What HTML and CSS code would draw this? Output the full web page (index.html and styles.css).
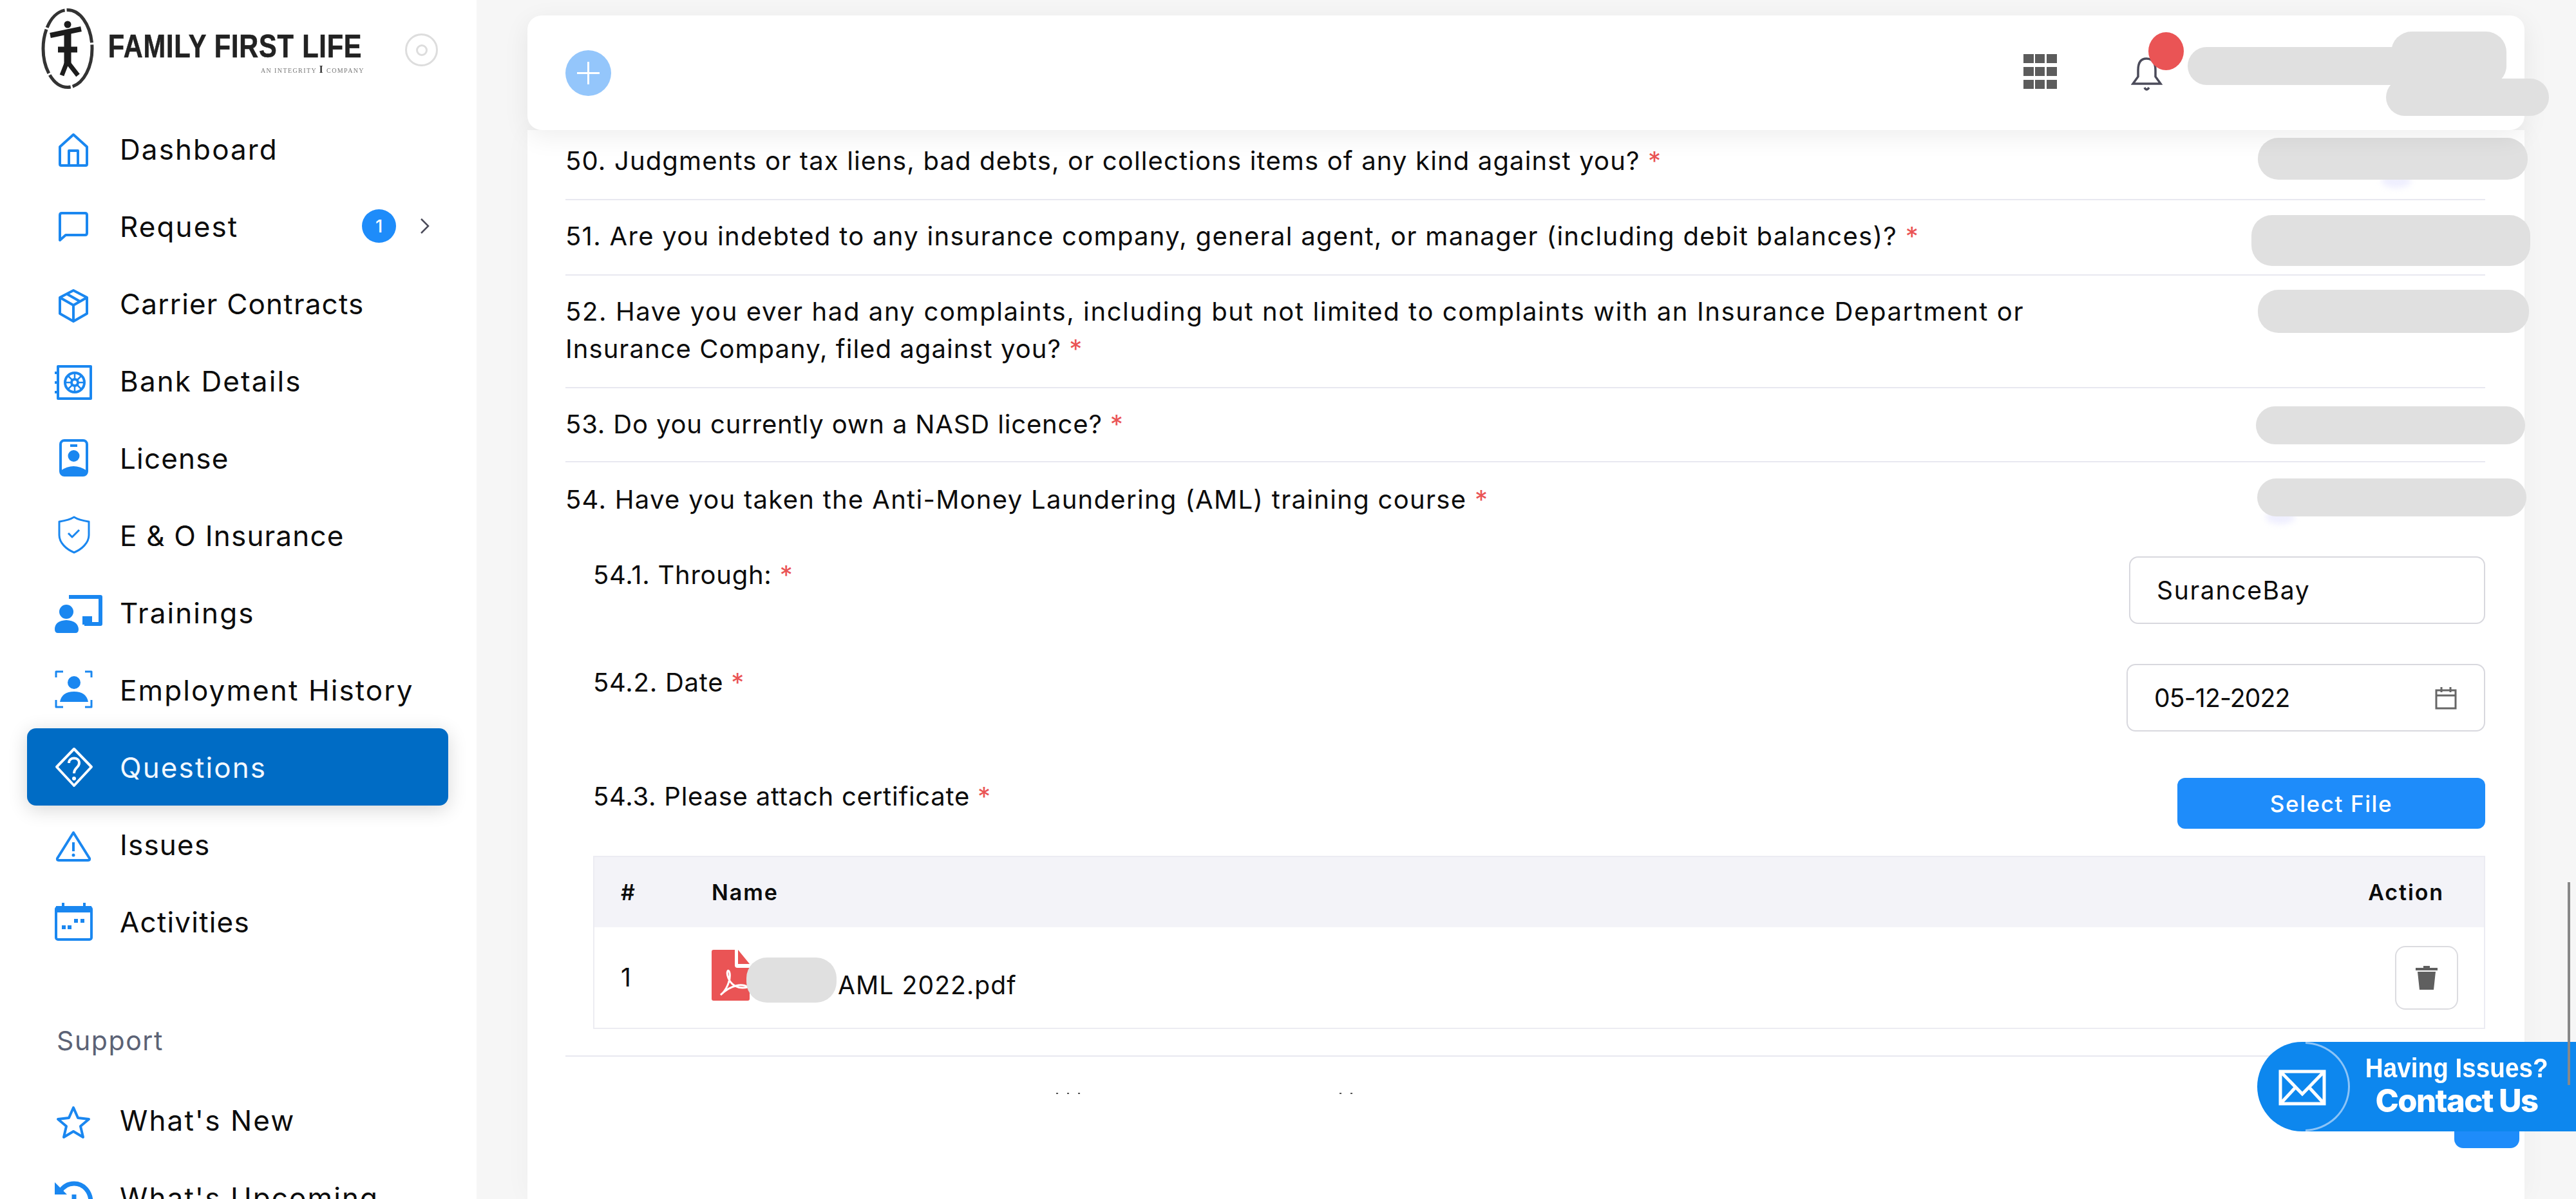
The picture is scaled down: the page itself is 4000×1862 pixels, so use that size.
FILE: index.html
```html
<!DOCTYPE html>
<html lang="en">
<head>
<meta charset="utf-8">
<title>Questions</title>
<link rel="stylesheet" href="styles.css">
</head>
<body>
<div class="app">
  <aside class="sidebar">
    <div class="brand">
      <svg class="brand-mark" viewBox="0 0 82 125">
        <ellipse cx="41" cy="62.500" rx="38" ry="60" fill="none" stroke="#333" stroke-width="5" stroke-dasharray="70 3 40 3"/>
        <circle cx="41" cy="25" r="5.500" fill="#1c1c1c"/>
        <path d="M14 42 L62 32" fill="none" stroke="#1c1c1c" stroke-width="8"/>
        <path d="M41 34 V90" fill="none" stroke="#1c1c1c" stroke-width="11"/>
        <path d="M26 64 H56" fill="none" stroke="#1c1c1c" stroke-width="9"/>
        <path d="M39 86 L32 104 M43 86 L57 104" fill="none" stroke="#1c1c1c" stroke-width="7"/>
      </svg>
      <div class="brand-text">
        <span class="brand-name">FAMILY FIRST LIFE</span>
        <span class="brand-sub">AN INTEGRITY <b>I</b> COMPANY</span>
      </div>
      <span class="brand-toggle"><i></i></span>
    </div>
    <nav class="nav">
      <a class="nav-item"><svg class="ico" viewBox="0 0 74 60"><path class="s" d="M29 8 L8 27 V54 Q8 56 10 56 H48 Q50 56 50 54 V27 Z M22 56 V33 H36 V56"/></svg><span>Dashboard</span></a>
      <a class="nav-item nav-request"><svg class="ico" viewBox="0 0 74 60"><path class="s" d="M11 10 H47 Q50 10 50 13 V41 Q50 44 47 44 H17 L8 52 V13 Q8 10 11 10 Z"/></svg><span>Request</span><b class="badge">1</b><svg class="chev" viewBox="0 0 15 24"><path d="M2 1 L13 12 L2 23" fill="none" stroke="#4b4b5a" stroke-width="2.500"/></svg></a>
      <a class="nav-item tight"><svg class="ico" viewBox="0 0 74 60"><path class="s" d="M29 10 L50 21 V46 L29 58 L8 46 V21 Z M8 21 L29 33 L50 21 M29 33 V58 M18 15 L39 27"/></svg><span>Carrier Contracts</span></a>
      <a class="nav-item"><svg class="ico" viewBox="0 0 74 60"><path class="s" d="M5 8 H56 V58 H5 Z M0 18 H5 M0 33 H5 M0 48 H5"/><circle class="s" cx="31" cy="33" r="15"/><circle class="s" cx="31" cy="33" r="5"/><path class="s s2" d="M31 18 V28 M31 38 V48 M16 33 H26 M36 33 H46 M20 22 L27 29 M35 37 L42 44 M42 22 L35 29 M27 37 L20 44"/></svg><span>Bank Details</span></a>
      <a class="nav-item tight"><svg class="ico" viewBox="0 0 74 60"><rect class="s" x="9" y="3" width="41" height="54" rx="6"/><path class="s" d="M24 11 H35"/><circle class="f" cx="29.500" cy="27" r="9"/><path class="f" d="M9 50 Q29 36 50 50 V52 Q50 58 44 58 H15 Q9 58 9 52 Z"/></svg><span>License</span></a>
      <a class="nav-item tight"><svg class="ico" viewBox="0 0 74 60"><path class="s s3" d="M30 2 C22 7 14 8 7 9 V30 C7 42 18 52 30 57 C42 52 53 42 53 30 V9 C46 8 38 7 30 2 Z M21 27 L27 33 L38 22"/></svg><span>E &amp; O Insurance</span></a>
      <a class="nav-item"><svg class="ico" viewBox="0 0 74 60"><path class="s s5" d="M22 6 H71 V48 H46"/><rect class="f" x="43" y="36" width="15" height="13"/><circle class="f" cx="18" cy="29" r="11"/><path class="f" d="M0 56 Q0 43 18 42 Q36 43 37 56 Q37 62 32 62 H5 Q0 62 0 56 Z"/></svg><span>Trainings</span></a>
      <a class="nav-item"><svg class="ico" viewBox="0 0 74 60"><path class="s s3" d="M2 11 V2 H13 M47 2 H57 V11 M2 46 V57 H13 M47 57 H57 V46"/><circle class="f" cx="30" cy="19" r="10"/><path class="f" d="M8 49 Q11 33 30 33 Q49 33 52 49 Z"/></svg><span>Employment History</span></a>
      <a class="nav-item is-active"><svg class="ico" viewBox="0 0 74 60"><path class="w" d="M30 2 L57 30 L30 59 L3 30 Z M22 24 C22 14 38 14 38 24 C38 31 30 31 30 40"/><circle cx="30" cy="48" r="3" fill="#fff"/></svg><span>Questions</span></a>
      <a class="nav-item tight"><svg class="ico" viewBox="0 0 74 60"><path class="s" d="M29 12 L54 52 Q55 55 52 55 H6 Q3 55 4 52 Z M29 27 V41"/><circle class="f" cx="29" cy="47" r="2.500"/></svg><span>Issues</span></a>
      <a class="nav-item tight"><svg class="ico" viewBox="0 0 74 60"><rect class="s" x="2" y="8" width="55" height="50" rx="3"/><rect class="f" x="2" y="6" width="55" height="10"/><path class="s" d="M13 1 V7 M46 1 V7"/><rect class="f" x="11" y="36" width="6" height="6"/><rect class="f" x="20" y="36" width="6" height="6"/><rect class="f" x="30" y="26" width="6" height="6"/><rect class="f" x="40" y="26" width="6" height="6"/></svg><span>Activities</span></a>
      <div class="nav-heading">Support</div>
      <a class="nav-item"><svg class="ico" viewBox="0 0 74 60"><path class="s" d="M29 11 L36 27 L53 29 L40 40 L44 57 L29 48 L14 57 L18 40 L5 29 L22 27 Z"/></svg><span>What's New</span></a>
      <a class="nav-item"><svg class="ico" viewBox="0 0 74 60"><path class="s s6" d="M8 22 C14 12 22 9 30 9 C45 9 56 22 56 38 M30 26 V46"/><path class="f" d="M0 7 L19 26 H0 Z"/></svg><span>What's Upcoming</span></a>
    </nav>
  </aside>

  <main class="main">
    <header class="topbar">
      <span class="add-btn"><svg viewBox="0 0 35 35"><path d="M17.500 0 V35 M0 17.500 H35" stroke="#fff" stroke-width="3"/></svg></span>
      <svg class="apps" viewBox="0 0 52 54"><g fill="#5c5c5c"><rect width="16" height="14"/><rect x="18" width="15" height="14"/><rect x="36" width="16" height="14"/><rect y="20" width="16" height="14"/><rect x="18" y="20" width="15" height="14"/><rect x="36" y="20" width="16" height="14"/><rect y="40" width="16" height="14"/><rect x="18" y="40" width="15" height="14"/><rect x="36" y="40" width="16" height="14"/></g></svg>
      <span class="bell">
        <svg viewBox="0 0 49 54"><path d="M24 2 C14 2 11 10 11 20 V30 L3 41 H46 L38 30 V20 C38 10 34 2 24 2 Z M21 47 Q24 53 28 47" fill="none" stroke="#4b4b5a" stroke-width="3.500"/></svg>
        <i class="bell-dot"></i>
      </span>
      <span class="mask mask-a"></span>
      <span class="mask mask-b"></span>
      <span class="mask mask-c"></span>
    </header>

    <section class="card">
      <div class="q q-first"><p>50. Judgments or tax liens, bad debts, or collections items of any kind against you? <em>*</em></p><span class="mask m50"></span><i class="tint tint-50"></i></div>
      <div class="q"><p>51. Are you indebted to any insurance company, general agent, or manager (including debit balances)? <em>*</em></p><span class="mask m51"></span></div>
      <div class="q q-52"><p>52. Have you ever had any complaints, including but not limited to complaints with an Insurance Department or<br><span class="q-52b">Insurance Company, filed against you? <em>*</em></span></p><span class="mask m52"></span></div>
      <div class="q q-53"><p>53. Do you currently own a NASD licence? <em>*</em></p><span class="mask m53"></span></div>
      <div class="q q-last">
        <p>54. Have you taken the Anti-Money Laundering (AML) training course <em>*</em></p><span class="mask m54"></span><i class="tint tint-54"></i>
        <div class="subs">
          <div class="sub sub-1"><p>54.1. Through: <em>*</em></p><div class="field field-text">SuranceBay</div></div>
          <div class="sub sub-2"><p>54.2. Date <em>*</em></p><div class="field field-date">05-12-2022<svg viewBox="0 0 34 36"><path d="M2 6 H32 V34 H2 Z M2 14 H32 M10 1 V9 M24 1 V9" fill="none" stroke="#666" stroke-width="3"/></svg></div></div>
          <div class="sub sub-3"><p>54.3. Please attach certificate <em>*</em></p><button class="select-btn">Select File</button></div>
          <table class="files">
            <thead><tr><th class="c-num">#</th><th>Name</th><th class="c-act">Action</th></tr></thead>
            <tbody><tr>
              <td class="c-num">1</td>
              <td><div class="file"><svg class="pdf" viewBox="0 0 59 79"><path fill="#ea5455" d="M3 0 H36 V24 Q36 28 40 28 H59 V76 Q59 79 56 79 H3 Q0 79 0 76 V3 Q0 0 3 0 Z M41 0 L59 22 H41 Z"/><path fill="none" stroke="#fff" stroke-width="3" d="M14 70 C22 64 30 48 28 36 C26 28 22 34 26 44 C30 54 40 62 56 58 C48 52 30 54 14 70 Z"/></svg><span class="mask m-file"></span><span class="file-name">AML 2022.pdf</span></div></td>
              <td class="c-act"><span class="del-btn"><svg viewBox="0 0 34 37"><path fill="#5f5f5f" d="M12 0 H22 V3 H34 V7 H0 V3 H12 Z M3 9 H31 L28 37 H6 Z"/></svg></span></td>
            </tr></tbody>
          </table>
        </div>
      </div>
      <div class="form-foot">
        <span class="specks"><i></i><i></i><i></i></span>
        <span class="specks specks-b"><i></i><i></i></span>
        <span class="next-btn"></span>
      </div>
    </section>
  </main>
</div>

<aside class="contact">
  <span class="contact-disc"><svg viewBox="0 0 74 56"><path d="M3 3 H71 V53 H3 Z M3 3 L37 38 L71 3 M3 53 L27 27 M71 53 L47 27" fill="none" stroke="#fff" stroke-width="5"/></svg></span>
  <span class="contact-text"><span class="contact-a">Having Issues?</span><span class="contact-b">Contact Us</span></span>
</aside>
<span class="thumb"></span>
</body>
</html>
```
FILE: styles.css
```css
* { box-sizing: border-box; }
html, body { margin: 0; height: 1862px; overflow: hidden; }
body { background: #f6f6f6; font-family: Inter, "Liberation Sans", sans-serif; color: #0c0c0c; position: relative; }
p { margin: 0; }
em { color: #ea5455; font-style: normal; }
.app { display: flex; height: 1862px; }

/* sidebar */
.sidebar { width: 740px; flex: none; background: #fff; height: 1862px; overflow: hidden; }
.brand { height: 171px; display: flex; align-items: flex-start; padding: 13px 0 0 64px; position: relative; }
.brand-mark { width: 82px; height: 125px; flex: none; filter: blur(.7px); }
.brand-text { display: flex; flex-direction: column; align-items: flex-end; width: 395px; margin-left: 21px; padding-top: 30px; filter: blur(.7px); color: #222; }
.brand-name { font-family: "Liberation Sans", sans-serif; font-weight: 700; font-size: 50px; line-height: 58px; letter-spacing: 1px; white-space: nowrap; transform: scaleX(.83); transform-origin: right center; -webkit-text-stroke: .6px #222; }
.brand-sub { font-family: "Liberation Serif", serif; font-size: 10px; line-height: 14px; letter-spacing: 1.4px; color: #777; white-space: nowrap; margin-right: -4px; }
.brand-sub b { font-size: 16px; color: #333; }
.brand-toggle { width: 51px; height: 51px; border: 3px solid #ddd; border-radius: 50%; margin: 39px 0 0 67px; display: flex; align-items: center; justify-content: center; flex: none; }
.brand-toggle i { width: 18px; height: 18px; border: 3px solid #ddd; border-radius: 50%; }

.nav { padding: 0 44px 0 42px; }
.nav-item { display: flex; align-items: center; height: 120px; padding: 0 29px 0 43px; font-size: 44px; letter-spacing: 2.1px; color: #0c0c0c; border-radius: 14px; white-space: nowrap; }
.nav-item.tight { letter-spacing: 1.2px; }
.nav-item > span:first-of-type { margin-left: 27px; padding-top: 1px; }
.ico { width: 74px; height: 60px; flex: none; overflow: visible; }
.s { fill: none; stroke: #1a87f0; stroke-width: 4; stroke-linejoin: round; }
.s2 { stroke-width: 2.5; }
.s3 { stroke-width: 3; }
.s5 { stroke-width: 6; }
.s6 { stroke-width: 7; }
.f { fill: #1a87f0; }
.w { fill: none; stroke: #fff; stroke-width: 4; stroke-linejoin: round; }
.is-active { background: #006cc5; color: #f2f8ff; box-shadow: 0 6px 30px rgba(0, 0, 0, .16); }
.badge { margin-left: auto; width: 53px; height: 52px; border-radius: 50%; background: #1e8cfa; color: #fff; font-weight: 500; font-size: 27px; letter-spacing: 0; display: flex; align-items: center; justify-content: center; }
.chev { width: 15px; height: 24px; margin-left: 37px; flex: none; }
.nav-heading { height: 188px; padding: 95px 0 0 46px; font-size: 41px; line-height: 60px; letter-spacing: 1.6px; color: #5b6275; }

/* main */
.main { flex: 1; min-width: 0; padding: 24px 80px 0 79px; display: flex; flex-direction: column; height: 1862px; }
.topbar { height: 178px; flex: none; background: #fff; border-radius: 22px; display: flex; align-items: center; padding-left: 59px; position: relative; z-index: 2; box-shadow: 0 10px 40px rgba(0, 0, 0, .07); }
.add-btn { width: 71px; height: 71px; border-radius: 50%; background: #94c6fb; display: flex; align-items: center; justify-content: center; }
.add-btn svg { width: 35px; height: 35px; }
.apps { width: 52px; height: 54px; margin-left: auto; margin-top: -4px; }
.bell { width: 49px; height: 54px; margin: 6px 562px 0 115px; position: relative; }
.bell svg { width: 49px; height: 54px; display: block; }
.bell-dot { position: absolute; left: 27px; top: -39px; width: 55px; height: 59px; border-radius: 50%; background: #ea5455; }
.mask { background: #e0e0e0; border-radius: 32px; position: absolute; display: block; z-index: 1; }
.mask-a { left: 2578px; top: 49px; width: 495px; height: 59px; }
.mask-b { left: 2894px; top: 25px; width: 179px; height: 83px; }
.mask-c { left: 2886px; top: 98px; width: 253px; height: 58px; }

.card { flex: 1; background: #fff; padding: 0 61px 0 59px; box-shadow: 0 0 40px rgba(0, 0, 0, .035); }
.q { position: relative; padding: 27px 0 30px; border-bottom: 2px solid #e8e8f0; font-size: 40px; line-height: 58px; letter-spacing: 1.3px; }
.q-first { padding-top: 19px; letter-spacing: 1.15px; }
.q-52 { letter-spacing: 1.6px; }
.q-52b { letter-spacing: 1.05px; }
.q-53 { padding: 27px 0 28px; letter-spacing: .85px; }
.q-last { padding: 29px 0 41px; }
.m50 { left: 2628px; top: 12px; width: 419px; height: 65px; }
.m51 { left: 2618px; top: 23px; width: 433px; height: 79px; }
.m52 { left: 2628px; top: 22px; width: 421px; height: 67px; }
.m53 { left: 2625px; top: 28px; width: 418px; height: 59px; }
.m54 { left: 2627px; top: 25px; width: 418px; height: 59px; }
.tint { position: absolute; width: 46px; height: 22px; border-radius: 50%; background: #efefff; filter: blur(5px); }
.tint-50 { left: 2820px; top: 68px; }
.tint-54 { left: 2640px; top: 74px; }

.subs { padding: 59px 0 0 43px; letter-spacing: .75px; }
.sub { display: flex; justify-content: space-between; align-items: flex-start; }
.sub-2 { margin-top: 62px; }
.sub-3 { margin-top: 72px; }
.field { height: 105px; border: 2.5px solid #d8d8de; border-radius: 14px; display: flex; align-items: center; font-size: 39px; padding: 0 41px; }
.field-text { width: 553px; letter-spacing: 1.7px; }
.field-date { width: 557px; justify-content: space-between; padding-right: 42px; letter-spacing: -.8px; }
.field-date svg { width: 34px; height: 36px; }
.select-btn { width: 478px; height: 79px; border: 0; border-radius: 12px; background: #1e8cfa; color: #fff; font: 500 35px Inter, sans-serif; letter-spacing: 1.6px; }

.files { width: 100%; margin-top: 42px; border-collapse: collapse; border: 2px solid #ececf2; }
.files th { background: #f3f3f8; height: 110px; text-align: left; font-size: 34px; font-weight: 600; letter-spacing: 1.9px; padding: 0; }
.files td { height: 157px; padding: 0; font-size: 39px; letter-spacing: 1.1px; }
.files .c-num { width: 183px; padding-left: 41px; }
.files .c-act { text-align: right; }
.files th.c-act { padding-right: 62px; }
.files td.c-act { padding-right: 40px; }
.file { display: flex; align-items: flex-start; position: relative; height: 82px; margin-top: -4px; }
.pdf { width: 59px; height: 79px; flex: none; }
.m-file { left: 54px; top: 12px; width: 140px; height: 70px; }
.file-name { margin-left: 137px; padding-top: 30px; line-height: 50px; white-space: nowrap; }
.del-btn { display: inline-flex; width: 98px; height: 99px; border: 2.5px solid #dcdce0; border-radius: 16px; align-items: center; justify-content: center; vertical-align: middle; }
.del-btn svg { width: 34px; height: 37px; }

.form-foot { display: flex; justify-content: flex-end; position: relative; padding-top: 59px; margin-right: -53px; }
.next-btn { width: 101px; height: 83px; background: #1e8cfa; border-radius: 14px; }
.specks { position: absolute; left: 762px; top: 56px; display: flex; gap: 14px; }
.specks i { width: 3px; height: 2px; background: #555; }
.specks-b { left: 1202px; }

/* contact */
.contact { position: absolute; left: 3505px; top: 1618px; width: 495px; height: 139px; background: #0d87ee; border-radius: 72px 0 0 72px; display: flex; color: #fff; z-index: 3; }
.contact-disc { width: 144px; height: 139px; flex: none; position: relative; display: flex; align-items: center; justify-content: center; }
.contact-disc::after { content: ""; position: absolute; inset: 0; border-radius: 50%; border: 3px solid #8cc4f7; clip-path: inset(0 0 0 52%); }
.contact-disc svg { width: 74px; height: 56px; margin-right: 4px; margin-top: 2px; }
.contact-text { display: flex; flex-direction: column; align-items: center; width: 281px; margin-left: 25px; }
.contact-a { font-family: "Liberation Sans", sans-serif; font-weight: 700; font-size: 43px; line-height: 50px; margin-top: 15px; white-space: nowrap; transform: scaleX(.9); }
.contact-b { font-family: Inter, sans-serif; font-weight: 800; font-size: 49px; line-height: 54px; letter-spacing: -1.6px; white-space: nowrap; }
.thumb { position: absolute; left: 3987px; top: 1370px; width: 4px; height: 315px; background: #888; z-index: 4; }
```
